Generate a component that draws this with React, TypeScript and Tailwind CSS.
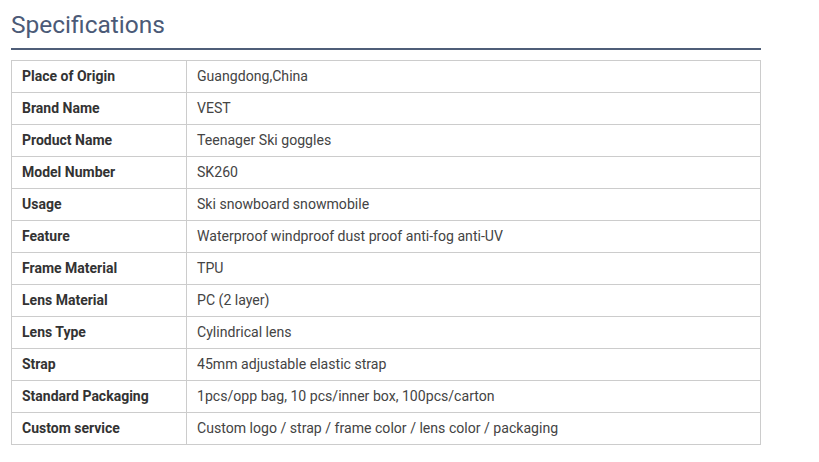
const rows: [string, string][] = [
  ["Place of Origin", "Guangdong,China"],
  ["Brand Name", "VEST"],
  ["Product Name", "Teenager Ski goggles"],
  ["Model Number", "SK260"],
  ["Usage", "Ski snowboard snowmobile"],
  ["Feature", "Waterproof windproof dust proof anti-fog anti-UV"],
  ["Frame Material", "TPU"],
  ["Lens Material", "PC (2 layer)"],
  ["Lens Type", "Cylindrical lens"],
  ["Strap", "45mm adjustable elastic strap"],
  ["Standard Packaging", "1pcs/opp bag, 10 pcs/inner box, 100pcs/carton"],
  ["Custom service", "Custom logo / strap / frame color / lens color / packaging"],
];

export default function App() {
  return (
    <div className="bg-white w-[819px] h-[462px] pl-[11px] pt-[7px]" style={{ fontFamily: "Roboto, 'Liberation Sans', sans-serif" }}>
      <div className="w-[750px]">
        <h2 className="text-[24.5px] leading-[36px] text-[#4b5a77] font-normal">Specifications</h2>
        <div className="h-[2px] bg-[#4f5e78] mt-[5px]" />
        <table className="mt-[10px] w-[750px] border-collapse table-fixed">
          <colgroup>
            <col className="w-[175px]" />
            <col />
          </colgroup>
          <tbody>
            {rows.map(([k, v]) => (
              <tr key={k} className="h-[32px]">
                <td className="border border-[#cccccc] pl-[10px] text-[14px] font-bold text-[#333333] p-0">{k}</td>
                <td className="border border-[#cccccc] pl-[10px] text-[14.1px] text-[#444444] p-0">{v}</td>
              </tr>
            ))}
          </tbody>
        </table>
      </div>
    </div>
  );
}
